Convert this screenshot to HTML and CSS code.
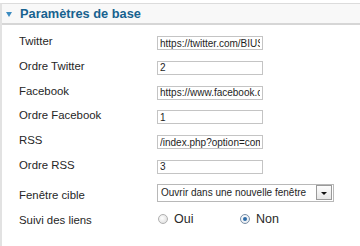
FILE: index.html
```html
<!DOCTYPE html>
<html lang="fr">
<head>
<meta charset="utf-8">
<link rel="stylesheet" href="styles.css">
</head>
<body>
<div class="panel">
  <div class="panel-head">
    <span class="caret"></span>
    <span class="title">Paramètres de base</span>
  </div>
  <div class="form">
    <label class="lbl">Twitter</label>
    <input class="txt" type="text" value="https://twitter.com/BIUSante">
    <label class="lbl">Ordre Twitter</label>
    <input class="txt" type="text" value="2">
    <label class="lbl">Facebook</label>
    <input class="txt" type="text" value="https://www.facebook.com/BIUSante">
    <label class="lbl">Ordre Facebook</label>
    <input class="txt" type="text" value="1">
    <label class="lbl">RSS</label>
    <input class="txt" type="text" value="/index.php?option=com_content">
    <label class="lbl">Ordre RSS</label>
    <input class="txt" type="text" value="3">
    <label class="lbl lbl-sel">Fenêtre cible</label>
    <div class="select">
      <span class="select-val">Ouvrir dans une nouvelle fenêtre</span>
      <span class="select-btn"><span class="arrow"></span></span>
    </div>
    <label class="lbl lbl-radio">Suivi des liens</label>
    <div class="radios">
      <label class="radio"><span class="dot"></span>Oui</label>
      <label class="radio"><span class="dot on"></span>Non</label>
    </div>
  </div>
</div>
</body>
</html>
```

FILE: styles.css
```css
html, body {
  margin: 0;
  padding: 0;
  background: #ffffff;
}
body {
  font-family: "Liberation Sans", Arial, sans-serif;
  color: #2a2a2a;
  padding-top: 3px;
}
.panel {
  border-left: 2px solid #e2e2e2;
  border-top: 1px solid #dcdcdc;
  min-height: 243px;
  box-sizing: border-box;
}
.panel-head {
  height: 19px;
  background: #f8f8f8;
  border-bottom: 2px solid #d6d6d6;
  display: flex;
  align-items: center;
  padding-left: 4px;
  gap: 8px;
}
.caret {
  width: 0;
  height: 0;
  border-left: 3px solid transparent;
  border-right: 3px solid transparent;
  border-top: 5px solid #3d8cc1;
  margin-top: 1px;
}
.title {
  font-size: 12.8px;
  font-weight: bold;
  color: #17628f;
  line-height: 14px;
}
.form {
  display: grid;
  grid-template-columns: 138px auto;
  row-gap: 10.8px;
  padding: 11px 0 0 17px;
  align-items: start;
}
.lbl {
  font-size: 11.4px;
  line-height: 12px;
  color: #262626;
  margin-top: -1px;
}
.txt {
  width: 106px;
  height: 14px;
  box-sizing: border-box;
  border: 1px solid #c4c4c4;
  margin: 0;
  padding: 0 2px;
  font-family: "Liberation Sans", Arial, sans-serif;
  font-size: 10px;
  color: #1e1e1e;
  background: #fff;
  outline: none;
}
.lbl-sel {
  margin-top: 4px;
}
.select {
  width: 177px;
  height: 18px;
  box-sizing: border-box;
  border: 1px solid #b8b8b8;
  display: flex;
  align-items: center;
  margin-top: -1px;
  background: #fff;
}
.select-val {
  flex: 1;
  font-size: 10px;
  padding-left: 3px;
  color: #1e1e1e;
}
.select-btn {
  width: 14px;
  height: 13px;
  border: 1px solid #9a9a9a;
  background: linear-gradient(#fdfdfd, #e6e6e6);
  margin-right: 1px;
  display: flex;
  align-items: center;
  justify-content: center;
}
.arrow {
  width: 0;
  height: 0;
  border-left: 3px solid transparent;
  border-right: 3px solid transparent;
  border-top: 3px solid #111;
  margin-top: 2px;
}
.lbl-radio {
  margin-top: 1px;
}
.radios {
  display: flex;
  align-items: center;
  height: 13px;
  margin-top: 0;
}
.radio {
  display: flex;
  align-items: center;
  font-size: 12.5px;
  color: #2a2a2a;
  width: 82px;
}
.dot {
  width: 10px;
  height: 10px;
  border-radius: 50%;
  box-sizing: border-box;
  border: 1px solid #b0b0b0;
  background: radial-gradient(circle at 40% 40%, #ffffff, #d8d8d8);
  margin: 0 6px 0 1px;
  position: relative;
}
.dot.on {
  border-color: #7a8fa6;
  background: radial-gradient(circle at 40% 40%, #ffffff, #dde3ea);
}
.dot.on::after {
  content: "";
  position: absolute;
  left: 2px;
  top: 2px;
  width: 4px;
  height: 4px;
  border-radius: 50%;
  background: #2d6ca8;
}
```
